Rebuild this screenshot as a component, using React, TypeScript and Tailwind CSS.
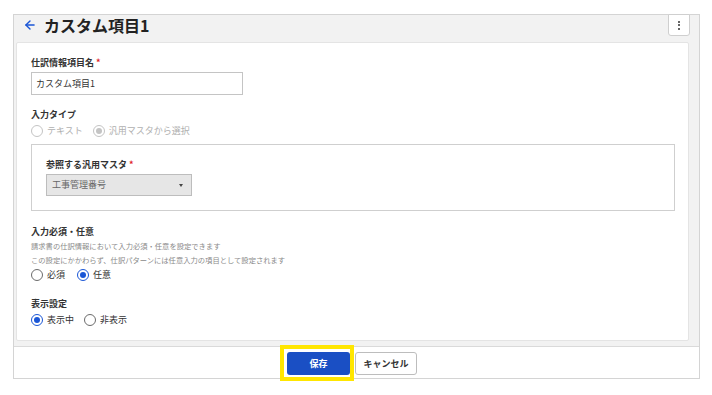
import { ArrowLeft } from "lucide-react";

function Radio({
  label,
  checked = false,
  disabled = false,
}: {
  label: string;
  checked?: boolean;
  disabled?: boolean;
}) {
  const ring = disabled
    ? "border-[#c4c4c4]"
    : checked
      ? "border-[#1a56d6]"
      : "border-[#6b6b6b]";
  const dot = disabled ? "bg-[#c4c4c4]" : "bg-[#1a56d6]";
  return (
    <label className="flex items-center gap-[4px]">
      <span
        className={`flex h-[12px] w-[12px] items-center justify-center rounded-full border-[1.5px] bg-white ${ring}`}
      >
        {checked && <span className={`h-[6px] w-[6px] rounded-full ${dot}`} />}
      </span>
      <span
        className={`text-[9px] leading-[14px] ${disabled ? "text-[#b0b0b0]" : "text-[#333]"}`}
      >
        {label}
      </span>
    </label>
  );
}

function Label({ text, required = false }: { text: string; required?: boolean }) {
  return (
    <div className="text-[9px] font-bold leading-[14px] text-[#333]">
      {text}
      {required && <span className="ml-[2px] text-[#e0202a]">*</span>}
    </div>
  );
}

export default function App() {
  return (
    <div className="min-h-[395px] bg-white pl-[13px] pt-[14px] font-['Noto_Sans_CJK_JP','Noto_Sans',sans-serif]">
      <div className="flex h-[365px] w-[687px] flex-col border border-[#d4d4d4] bg-[#f2f2f2]">
        {/* Header */}
        <div className="flex h-[27px] shrink-0 items-start justify-between pr-[9px]">
          <div className="flex h-[19px] items-center gap-[7px] pl-[9px]">
            <ArrowLeft size={14} strokeWidth={2.4} className="text-[#1a56d6]" />
            <h1 className="text-[16px] font-bold leading-none text-[#222]">
              カスタム項目1
            </h1>
          </div>
          <button className="-mt-px flex h-[22px] w-[22px] flex-col items-center justify-center gap-[1.5px] rounded-b-[3px] border border-[#cfcfcf] bg-white">
            <span className="h-[2px] w-[2px] rounded-full bg-[#333]" />
            <span className="h-[2px] w-[2px] rounded-full bg-[#333]" />
            <span className="h-[2px] w-[2px] rounded-full bg-[#333]" />
          </button>
        </div>

        {/* Card */}
        <div className="ml-[2px] mr-[10px] h-[299px] shrink-0 rounded-[2px] border border-[#e4e4e4] bg-white px-[14px] pt-[13px]">
          <Label text="仕訳情報項目名" required />
          <div className="mt-[2px] flex h-[23px] w-[212px] items-center border border-[#c4c4c4] px-[4px] text-[9px] text-[#333]">
            カスタム項目1
          </div>

          <div className="mt-[13px]">
            <Label text="入力タイプ" />
          </div>
          <div className="mt-[2px] flex gap-[10px]">
            <Radio label="テキスト" disabled />
            <Radio label="汎用マスタから選択" checked disabled />
          </div>

          <div className="mt-[6px] h-[67px] w-[644px] border border-[#cfcfcf] px-[14px] pt-[13px]">
            <Label text="参照する汎用マスタ" required />
            <div className="mt-[2px] flex h-[22px] w-[146px] items-center justify-between border border-[#bdbdbd] bg-[#e6e6e6] pl-[5px] pr-[8px] text-[9px] text-[#666]">
              工事管理番号
              <span className="h-0 w-0 border-x-[2.5px] border-t-[3px] border-x-transparent border-t-[#444]" />
            </div>
          </div>

          <div className="mt-[14px]">
            <Label text="入力必須・任意" />
          </div>
          <p className="text-[7.3px] leading-[14px] text-[#8a8a8a]">
            請求書の仕訳情報において入力必須・任意を設定できます
          </p>
          <p className="text-[7.3px] leading-[14px] text-[#8a8a8a]">
            この設定にかかわらず、仕訳パターンには任意入力の項目として設定されます
          </p>
          <div className="mt-px flex gap-[12px]">
            <Radio label="必須" />
            <Radio label="任意" checked />
          </div>

          <div className="mt-[15px]">
            <Label text="表示設定" />
          </div>
          <div className="mt-[2px] flex gap-[10px]">
            <Radio label="表示中" checked />
            <Radio label="非表示" />
          </div>
        </div>

        {/* Footer */}
        <div className="mt-[5px] flex flex-1 items-start justify-center gap-[5px] border-t border-[#dadada] bg-white pr-[9px] pt-[5px]">
          <div className="relative">
            <button className="flex h-[23px] w-[63px] items-center justify-center rounded-[3px] bg-[#1a4fc4] text-[9px] font-bold text-white">
              保存
            </button>
            <span className="pointer-events-none absolute -bottom-[6px] -left-[7px] -right-[4px] -top-[7px] border-[4px] border-[#ffe600]" />
          </div>
          <button className="flex h-[23px] w-[62px] items-center justify-center rounded-[3px] border border-[#bdbdbd] bg-white text-[9px] font-bold text-[#333]">
            キャンセル
          </button>
        </div>
      </div>
    </div>
  );
}
